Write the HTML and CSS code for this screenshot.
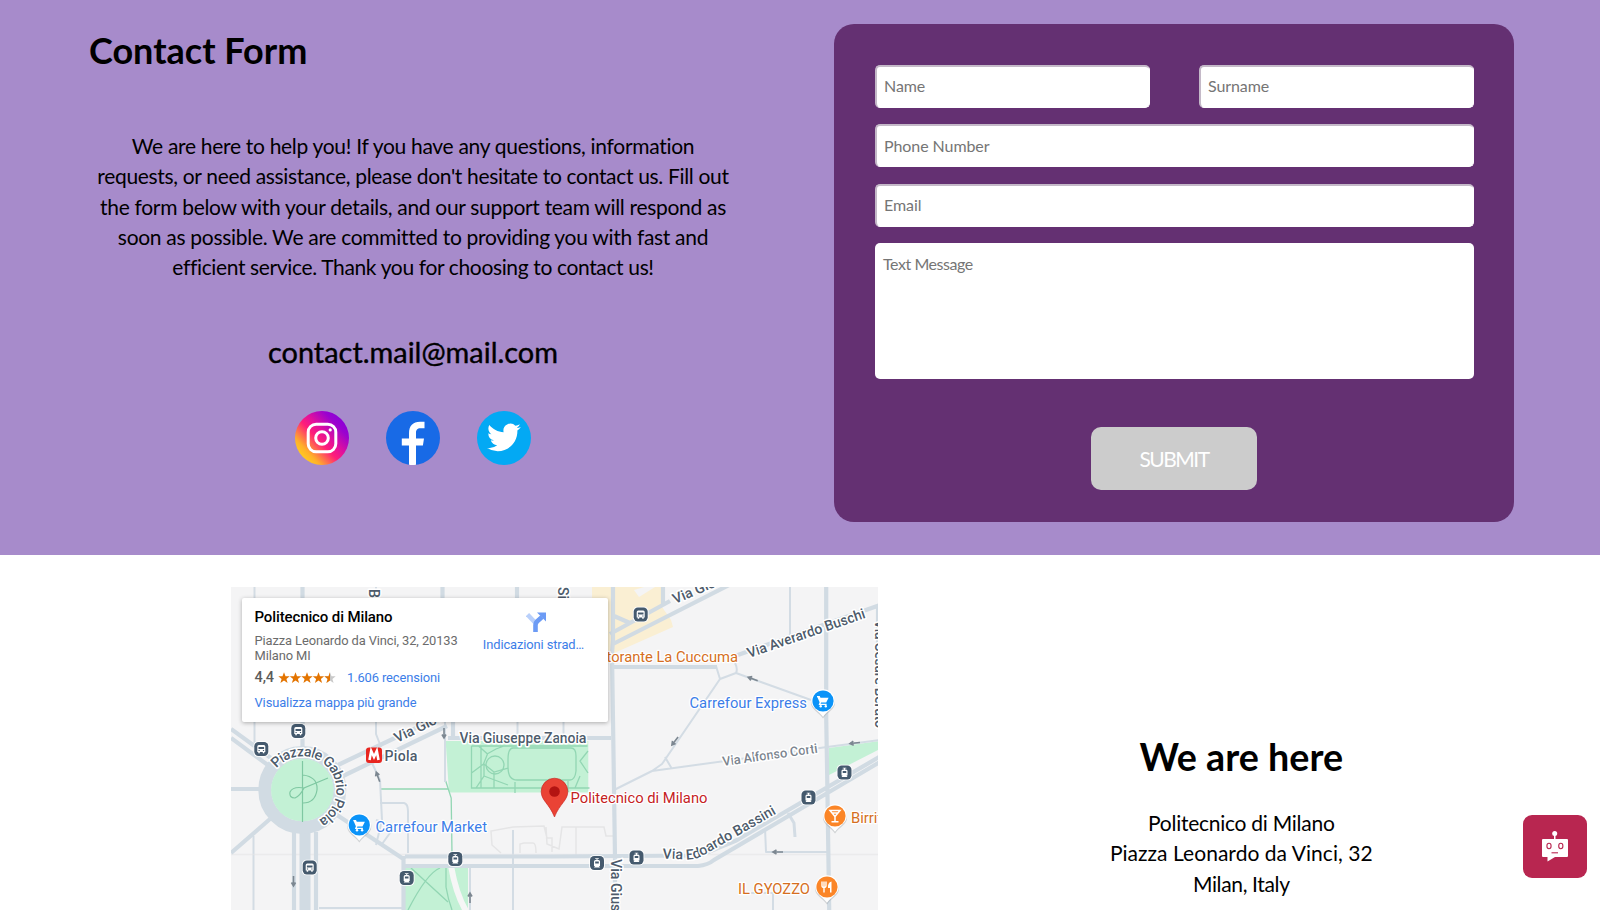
FILE: index.html
```html
<!DOCTYPE html>
<html lang="en">
<head>
<meta charset="utf-8">
<title>Contact Form</title>
<link rel="stylesheet" href="styles.css">
</head>
<body>
<section class="contact">
  <div class="intro">
    <h1 class="title">Contact Form</h1>
    <p class="lead">
      <span class="l1">We are here to help you! If you have any questions, information</span>
      <span class="l2">requests, or need assistance, please don't hesitate to contact us. Fill out</span>
      <span class="l3">the form below with your details, and our support team will respond as</span>
      <span class="l4">soon as possible. We are committed to providing you with fast and</span>
      <span class="l5">efficient service. Thank you for choosing to contact us!</span>
    </p>
    <p class="mail"><span>contact.mail@mail.com</span></p>
    <div class="social">
      <svg viewBox="0 0 54 54">
        <defs>
          <linearGradient id="ig" x1="0.1" y1="0.9" x2="0.9" y2="0.15">
            <stop offset="0" stop-color="#ffd51e"/><stop offset=".18" stop-color="#ffb02a"/>
            <stop offset=".45" stop-color="#ff1f78"/><stop offset=".6" stop-color="#e3119b"/>
            <stop offset=".85" stop-color="#9a02cf"/><stop offset="1" stop-color="#8a00d8"/>
          </linearGradient>
        </defs>
        <circle cx="27" cy="27" r="27" fill="url(#ig)"/>
        <rect x="13.2" y="13.2" width="27.6" height="27.6" rx="8" fill="none" stroke="#fff" stroke-width="3"/>
        <circle cx="27" cy="27" r="6.3" fill="none" stroke="#fff" stroke-width="3"/>
        <circle cx="35.2" cy="18.9" r="1.6" fill="#fff"/>
      </svg>
      <svg viewBox="0 0 54 54">
        <circle cx="27" cy="27" r="27" fill="#186ae6"/>
        <path fill="#fff" d="M23 53.7V34.5h-7.2v-7H23v-5.2c0-7.700 4-11.600 11-11.600h4.500v6.500h-4c-3.300 0-4.500 1.700-4.500 4.700v5.600h8l-1.100 7H30v19.200c-2.300.3-4.700.3-7 0z"/>
      </svg>
      <svg viewBox="0 0 54 54">
        <circle cx="27" cy="27" r="27" fill="#03a9f4"/>
        <path fill="#fff" transform="translate(10 9.500) scale(1.410)" d="M23.950 4.570a10 10 0 01-2.820.770 4.960 4.960 0 002.160-2.720c-.950.550-2 .950-3.120 1.180a4.920 4.920 0 00-8.380 4.480C7.690 8.090 4.070 6.130 1.640 3.160a4.820 4.820 0 00-.670 2.480c0 1.710.870 3.210 2.190 4.100a4.900 4.900 0 01-2.230-.620v.060a4.920 4.920 0 003.950 4.830 5 5 0 01-2.210.080 4.940 4.940 0 004.600 3.420A9.870 9.870 0 010 19.540a14 14 0 007.550 2.210c9.050 0 14-7.500 14-13.990 0-.210 0-.420-.020-.630a9.940 9.940 0 002.460-2.550z"/>
      </svg>
    </div>
  </div>
  <form class="card">
    <div class="pair">
      <input class="field" type="text" placeholder="Name">
      <input class="field" type="text" placeholder="Surname">
    </div>
    <input class="field" type="text" placeholder="Phone Number">
    <input class="field" type="text" placeholder="Email">
    <textarea class="field area" placeholder="Text Message"></textarea>
    <button class="submit" type="button">SUBMIT</button>
  </form>
</section>

<section class="place">
  <div class="map">
    <svg class="tiles" viewBox="231 587 648 323">
      <defs>
        <g id="badge"><rect x="-7.800" y="-7.800" width="15.600" height="15.600" rx="4.500" fill="#fff"/><rect x="-7" y="-7" width="14" height="14" rx="4.200" fill="#455a6e"/></g>
        <g id="bus"><use href="#badge"/><path fill="#fff" fill-rule="evenodd" d="M-4-2.500q0-1.500 1.500-1.500h5q1.500 0 1.500 1.500V3H3v1.200H1.500V3h-3v1.200H-3V3h-1zM-2.800-2v2h5.600v-2zM-2.800 1v1h1.200V1zM1.600 1v1h1.200V1z"/></g>
        <g id="tram"><use href="#badge"/><path fill="#fff" fill-rule="evenodd" d="M-1.800-4.800h3.600v.9H.5v.9h1Q3-3 3-1.500V3h-1l1 1.500H-3L-2 3h-1v-4.500Q-3-3-1.500-3h1v-.9h-1.300zM-1.800-1.500v2h3.600v-2z"/></g>
        <g id="drop"><path fill="#8a9199" opacity=".35" d="M-12 1.500a12 12 0 1124 0c0 7-7 9-12 16-5-7-12-9-12-16z"/><path fill="#fff" d="M-11.800 0a11.800 11.800 0 1123.600 0c0 7-7 9-11.800 15.800C-4.800 9-11.800 7-11.800 0z"/></g>
        <g id="shop"><use href="#drop"/><circle r="10.600" fill="#0b93f8"/><path fill="#fff" d="M-6-5h2.700l.8 1.700h8.100L3.200 1.600h-5.100l-.5 1.200h6V4h-8l1-2.800-2.200-5H-6z"/><circle cx="-2.300" cy="5.200" r="1.200" fill="#fff"/><circle cx="2.800" cy="5.200" r="1.200" fill="#fff"/></g>
        <path id="ringtext" d="M276.500 768.500A33.800 33.800 0 11302.300 823.800"/>
        <path id="bassini" d="M662.500 858.500L690 859.500Q697 859 704 855L779 812"/>
        <path id="arrow" d="M0-5V5M-2 1.500L0 5 2 1.500" fill="none" stroke="#7c8791" stroke-width="1.600"/>
      </defs>
      <rect x="231" y="587" width="648" height="323" fill="#f4f4f5"/>
      <path fill="#faefd3" d="M592 587h70v20l9 13 2 7-61 27-20-10z"/>
      <path fill="#f4f4f5" d="M634 590l10-3h11l-16 10z"/>
      <g fill="#c3f1d5">
        <path d="M445.700 741H588.300V792.600H449z"/>
        <path d="M405 867h63v43h-63z"/>
        <path d="M829 748l51-7v8l-51 26z"/>
      </g>
      <path d="M451 866q5 28 15 45" stroke="#f6f6f6" stroke-width="6" fill="none"/>
      <g fill="none" stroke="#92d6b3" stroke-width="1.300">
        <path d="M381 789h67M445.700 781l5.500 17 .8 56M471.500 746v42h118M471.500 746h116M481 746v42M513 748h58q5 0 5 8v15q-1 9-6 9h-53q-9 0-9-13v-7q0-12 5-12M471.500 773l12-9 4-10-9-8M484 764l10 8 14-4M487 754l9-5 8-3M484 764v12l-8 12M494 772v16M484 776l24 9M588 751l-8 10 8 12M575 788l5-12M515 782v11M568 781v11"/>
        <circle cx="495" cy="765" r="9"/>
        <path d="M411 868l37 34M440 868q-13 5-32 42M446 867v20q2 12 6 23"/>
      </g>
      <g fill="none" stroke="#d3dce4" stroke-width="2" stroke-linejoin="round">
        <path d="M254.500 587v166M253.500 836v74M376 587v147l5 13M372 763l8 17 2 40-6 25M380 803h24q4 1 4 8v42M376 820l6 2M390 833l-8 11M445 720v62M513 830v80M517.500 587v149M563.500 720v20M470 868v42M790 587v50M716 666l4 13 16-6q2-4-1-10M736 673l75 27M720 679l-58 85-10 7-38 19M665 757l7 12M652 771l175-24M827 747l53-7M765 828l1 24h62M773 910v-17h-28M319 908h83"/>
        <path d="M788 813l6 10 1 14" stroke-width="3"/>
      </g>
      <g fill="none" stroke="#e5e5e6" stroke-width="1.500">
        <path d="M501 853l-9-8-1-14 22-4 31-1 3 12h5v14M520 853v-9l4-1h9q3 0 3 10M546 827l1 17 12 5 3-22h14v28M576 827h28l2 9h7"/>
        <path d="M231 854.500h370M700 854.500h179" opacity=".6"/>
      </g>
      <g fill="none" stroke="#d1dbe3" stroke-width="4.200">
        <path d="M302.500 587v166M442.500 587v35M517 587v15M231 729l55 40M231 738l45 33M231 789h30M270 819l-39 34M338 765l118-56M343 776l104-50M448 738h163M453 720v18M334 813l71 47M405 856.500h145l150-1 36-15 144-84M405 866h293q10-1 16-6l166-98M403.500 856v54M294 832v78M316 832v78M613 587v53l-1 14 1 66 2 137v53M826.200 587v130l1 60 2 133M612 667h105M735 656l145-51M878 606v50M610 634l60-33M613 644l122-62M663 587v18M614 616l16 7"/>
        <path d="M305 830v80" stroke-width="11"/>
      </g>
      <circle cx="302.300" cy="790" r="37.500" fill="none" stroke="#d1dbe3" stroke-width="13"/>
      <circle cx="302.300" cy="790" r="31.300" fill="#c3f1d5"/>
      <path fill="none" stroke="#7fc8a2" stroke-width="1.200" d="M302.500 761v61M328 778l-24 10q-4 8-9 10-6 0-5-6 3-6 14-4M303 775q15 2 14 15-2 13-14 13"/>
      <use href="#arrow" x="293.500" y="881"/><use href="#arrow" x="444" y="733"/>
      <use href="#arrow" transform="translate(378 777) rotate(160)"/><use href="#arrow" transform="translate(470 898) rotate(180)"/>
      <use href="#arrow" transform="translate(675 741) rotate(38)"/><use href="#arrow" transform="translate(753 679) rotate(110)"/>
      <use href="#arrow" transform="translate(855 743) rotate(84)"/><use href="#arrow" transform="translate(778 852) rotate(90)"/>
      <g class="label">
        <text x="459.500" y="743" textLength="127">Via Giuseppe Zanoia</text>
        <text transform="translate(397 743) rotate(-26)">Via Giov</text>
        <text transform="translate(675 604) rotate(-23)">Via Giov</text>
        <text transform="translate(749 658) rotate(-19)" textLength="124">Via Averardo Buschi</text>
        <text class="soft" transform="translate(723 766) rotate(-8)" textLength="96">Via Alfonso Corti</text>
        <text textLength="126"><textPath href="#bassini">Via Edoardo Bassini</textPath></text>
        <text transform="translate(610.500 859) rotate(90)">Via Giuseppe</text>
        <text transform="translate(875 620) rotate(90)" textLength="108">Via Cesare Beruto</text>
        <text transform="translate(557.500 587) rotate(90)">Si</text>
        <text transform="translate(369 589) rotate(90)">B</text>
        <text class="round"><textPath href="#ringtext" textLength="119">Piazzale Gabrio Piola</textPath></text>
        <text x="384.500" y="760.500" textLength="33">Piola</text>
      </g>
      <rect x="366" y="747.500" width="16" height="15.500" rx="3" fill="#e8251f"/>
      <path fill="none" stroke="#fff" stroke-width="2.600" d="M369.500 760l1.700-9 2.800 6 2.800-6 1.700 9"/>
      <g class="poi">
        <text class="blue" x="375.500" y="832" textLength="111.500">Carrefour Market</text>
        <text class="blue" x="689.500" y="708" textLength="117.500">Carrefour Express</text>
        <text class="red" x="570.500" y="802.500" textLength="137">Politecnico di Milano</text>
        <text class="orange" x="599" y="662" textLength="139">storante La Cuccuma</text>
        <text class="orange" x="738" y="894" textLength="72">IL GYOZZO</text>
        <text class="orange" x="851" y="823">Birrificio</text>
      </g>
      <use href="#bus" x="298.300" y="731"/><use href="#bus" x="261.300" y="749"/><use href="#bus" x="309.700" y="867.500"/><use href="#bus" x="640.700" y="614.500"/>
      <use href="#tram" x="455.300" y="859"/><use href="#tram" x="406.700" y="878"/><use href="#tram" x="597" y="863"/><use href="#tram" x="636.500" y="857.500"/><use href="#tram" x="808.500" y="797.500"/><use href="#tram" x="844.500" y="772.500"/>
      <use href="#shop" x="359.300" y="825"/><use href="#shop" x="823" y="701"/>
      <g transform="translate(835 816)"><use href="#drop"/><circle r="10.600" fill="#fb8527"/><path fill="none" stroke="#fff" stroke-width="1.500" d="M-5-5.500H5L0 .5zM0 0v5.500M-3.500 5.800h7M-3-3h6"/></g>
      <g transform="translate(827 887)"><use href="#drop"/><circle r="10.600" fill="#fb8527"/><path fill="none" stroke="#fff" stroke-width="1.400" d="M-5-5.500v4q0 2 2 2t2-2v-4M-3-5.500v11"/><path fill="#fff" d="M4.500-5.500v11H3V1H1q-.5-5.500 3.500-6.500z"/></g>
      <path fill="#ea4335" stroke="#c5221f" stroke-width=".6" d="M541.200 791.500a13.300 13.300 0 1126.600 0c0 9-8 12-13.300 25.500-5.300-13.500-13.300-16.500-13.300-25.500z"/>
      <circle cx="554.500" cy="791.500" r="5.300" fill="#b31412"/>
    </svg>
    <div class="info">
      <div class="details">
        <h3 class="name">Politecnico di Milano</h3>
        <p class="address">Piazza Leonardo da Vinci, 32, 20133<br>Milano MI</p>
        <div class="rating">
          <span class="score">4,4</span>
          <svg class="stars" viewBox="0 0 58 12">
            <defs><path id="star" d="M6 .3l1.500 4h4.200L8.400 6.900l1.200 4.100L6 8.600 2.400 11l1.200-4.100L.3 4.300h4.200z"/></defs>
            <g fill="#e37400"><use href="#star"/><use href="#star" x="11.500"/><use href="#star" x="23"/><use href="#star" x="34.500"/></g>
            <use href="#star" x="46" fill="#c9c9c9"/><path fill="#e37400" d="M52 .3v8.300L48.400 11l1.200-4.100-3.300-2.600h4.200z"/>
          </svg>
          <span class="link">1.606 recensioni</span>
        </div>
        <span class="link larger">Visualizza mappa più grande</span>
      </div>
      <div class="directions">
        <svg viewBox="0 0 20 20"><path fill="none" stroke="#b9d0fb" stroke-width="4.500" d="M1.500 2.500L9.500 11"/><path fill="none" stroke="#6c9bf5" stroke-width="4.600" d="M9.500 20v-7q0-2 1.500-3.500L16 5"/><path fill="#6c9bf5" d="M11 .5h9V9.500z"/></svg>
        <span class="link">Indicazioni strad…</span>
      </div>
    </div>
  </div>
  <div class="where">
    <h2 class="title">We are here</h2>
    <p class="lead"><span class="a1">Politecnico di Milano</span><span class="a2">Piazza Leonardo da Vinci, 32</span><span class="a3">Milan, Italy</span></p>
  </div>
</section>

<button class="bot" type="button" aria-label="Chat">
  <svg viewBox="0 0 26 31"><circle cx="12.700" cy="2.500" r="2.500" fill="#fff"/><path fill="#fff" d="M12 3h1.500v5H25q1 0 1 1v16q0 1-1 1H13l-7.500 4.500V26H1q-1 0-1-1V9q0-1 1-1h11z"/><g fill="none" stroke="#b82650" stroke-width="1.100"><ellipse cx="7" cy="15" rx="2.100" ry="2.700"/><ellipse cx="18.800" cy="15" rx="2.100" ry="2.700"/><path d="M9.500 21.800h6.500"/></g></svg>
</button>
</body>
</html>
```
FILE: styles.css
```css
* { box-sizing: border-box; }
body { margin: 0; height: 910px; overflow: hidden; background: #fff; color: #000; font-family: Lato, sans-serif; }
p, h1, h2, h3 { margin: 0; }

.contact { display: flex; height: 555px; padding: 24.400px 86px 0 89px; background: #a78bcb; }
.intro { width: 648px; display: flex; flex-direction: column; align-items: center; }
.title { font-size: 36px; line-height: 50px; font-weight: 700; white-space: nowrap; }
.intro .title { align-self: flex-start; margin-top: .6px; }
.lead { display: flex; flex-direction: column; align-items: center; font-size: 21px; line-height: 30.300px; white-space: nowrap; }
.l1, .l4 { letter-spacing: -.3px; }
.l2 { letter-spacing: -.33px; }
.l3 { letter-spacing: -.31px; }
.l5 { letter-spacing: -.36px; }
.a1 { letter-spacing: -.26px; }
.a2 { letter-spacing: .04px; }
.a3 { letter-spacing: -.35px; }
.intro .lead { margin-top: 56px; }
.mail { margin-top: 47.500px; font-size: 28.900px; line-height: 44px; -webkit-text-stroke: .4px #000; }
.social { display: flex; gap: 36.600px; margin-top: 37px; }
.social svg { width: 54px; height: 54px; }

.card { display: flex; flex-direction: column; width: 680px; height: 497.600px; margin-left: 97px; padding: 40.600px 40.500px 0; border-radius: 20px; background: #643072; }
.pair { display: flex; flex-shrink: 0; justify-content: space-between; }
.pair .field { width: 275px; }
.field { display: block; flex-shrink: 0; width: 100%; height: 43px; margin: 0 0 16.300px; padding: 0 7.500px 2px; border: solid #fff; border-width: 2px 1px 1px 2px; border-top-color: #c4b9c8; border-left-color: #c4b9c8; border-radius: 5px; background: #fff; font: 16px Lato, sans-serif; letter-spacing: -.08px; outline: none; }
.field::placeholder { color: #757575; opacity: 1; }
.area { height: 136px; padding: 11px 8.500px; border: 0; resize: none; letter-spacing: -.45px; }
.submit { align-self: center; flex-shrink: 0; width: 165.500px; height: 62.500px; margin-top: 32px; padding: 0; border: 0; border-radius: 10px; background: #ccc; color: #fff; font: 21px Lato, sans-serif; letter-spacing: -1.500px; }

.place { display: flex; padding: 32px 0 0 231px; }
.map { position: relative; width: 648px; height: 323px; overflow: hidden; }
.tiles { display: block; width: 648px; height: 323px; font-family: Roboto, sans-serif; }
.label text { font-size: 14.200px; font-weight: 500; fill: #4d5b6b; stroke: #fff; stroke-width: 3px; paint-order: stroke; stroke-linejoin: round; }
.label .soft { font-size: 13px; fill: #7c858f; }
.poi text { font-size: 14.800px; stroke: #fff; stroke-width: 2.500px; paint-order: stroke; stroke-linejoin: round; }
.poi .blue { fill: #3b7de8; }
.poi .red { fill: #c5221f; }
.poi .orange { fill: #d56e22; }

.info { position: absolute; left: 11px; top: 11px; display: flex; justify-content: space-between; width: 366px; height: 124px; padding: 10px 24px 0 12.500px; background: #fff; border-radius: 2px; box-shadow: 0 1px 4px rgba(0, 0, 0, .3); font-family: Roboto, sans-serif; font-size: 12.900px; letter-spacing: -.1px; white-space: nowrap; }
.name { font-size: 15px; line-height: 18px; font-weight: 500; letter-spacing: -.12px; }
.address { margin-top: 6.500px; line-height: 15px; color: #6b6b6b; }
.rating { display: flex; align-items: center; height: 19px; margin-top: 5.500px; }
.score { width: 23px; font-size: 14.500px; font-weight: 500; color: #5b5b5b; }
.stars { width: 58px; height: 12px; margin-right: 11.500px; }
.link { color: #3b7de8; }
.larger { display: block; margin-top: 8px; line-height: 16px; }
.directions { display: flex; flex-direction: column; align-items: center; padding-top: 4px; }
.directions svg { width: 20px; height: 20px; margin: 0 0 5px 5px; }

.where { width: 724px; display: flex; flex-direction: column; align-items: center; padding: 145px 0 0 5px; }
.where .title { font-size: 37.700px; }
.where .lead { margin-top: 26px; }

.bot { position: absolute; left: 1523px; top: 815px; display: grid; place-items: center; width: 64px; height: 63px; padding: 0; border: 0; border-radius: 9px; background: #b82650; }
.bot svg { width: 26px; height: 31px; }
```
